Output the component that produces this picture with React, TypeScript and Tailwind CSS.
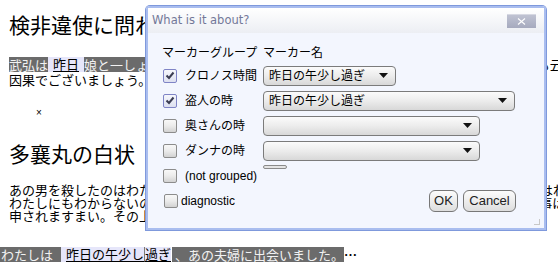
import React from "react";

function Cb({ checked }: { checked?: boolean }) {
  if (checked) {
    return (
      <span className="flex h-[14px] w-[14px] shrink-0 items-center justify-center rounded-[2px] border border-[#7f84c6] bg-linear-to-b from-[#f6f7fc] to-[#dde0f0]">
        <svg width="10" height="9" viewBox="0 0 10 9">
          <path d="M1.5 4.5 L4 7 L8.5 1.5" fill="none" stroke="#3b3d52" strokeWidth="2" />
        </svg>
      </span>
    );
  }
  return (
    <span className="block h-[14px] w-[14px] shrink-0 rounded-[2px] border border-[#8c8c8c] bg-linear-to-b from-[#f8f8f8] via-[#ebebeb] to-[#d2d2d2]" />
  );
}

function Sel({ w, text }: { w: string; text?: string }) {
  return (
    <div
      className={`flex h-[20px] items-center justify-between rounded-[4px] border border-[#7b7b7b] bg-linear-to-b from-[#fbfbfb] via-[#ececec] to-[#d8d8d8] pl-[5px] pr-[7px] ${w}`}
    >
      <span className="text-[12px] leading-[14px]">{text ?? ""}</span>
      <svg width="9" height="5" viewBox="0 0 9 5">
        <polygon points="0,0 9,0 4.5,5" fill="#111" />
      </svg>
    </div>
  );
}

export default function App() {
  return (
    <div className="relative h-[278px] w-[558px] overflow-hidden bg-white font-['Noto_Sans_CJK_JP',sans-serif] text-black">
      <div className="whitespace-nowrap pl-[9px]">
        <div className="pt-[12px] text-[21px] leading-[24px]">検非違使に問われたる木樵りの物語</div>

        <div className="mt-[21px] flex h-[15px] text-[13px] leading-[15px]">
          <span className="bg-[#6b6b6b] text-[#f2f2f2]">武弘は</span>
          <span className="flex bg-[#e6e6fa] px-[5px]">
            <span className="h-[15px] border-b border-black leading-[14px]">昨日</span>
          </span>
          <span className="bg-[#6b6b6b] text-[#f2f2f2]">娘と一しょに、若狭へ立ったのでございます。</span>
          <span>あの男がかようになりましたのも云わば</span>
        </div>
        <div className="text-[13px] leading-[15px]">因果でございましょう。</div>

        <div className="mt-[20px] pl-[27px] font-['Liberation_Sans',sans-serif] text-[10px] leading-[12px]">×</div>

        <div className="mt-[22px] text-[21px] leading-[24px]">多襄丸の白状</div>

        <div className="mt-[18px] text-[13px] leading-[13px]">
          <div>あの男を殺したのはわたしです。しかし女は殺しはしません。では何処へ行ったのか？それはわたしに</div>
          <div>わたしにもわからないのです。まあ、お待ちなさい。いくら拷問にかけられても、知らない事は申されません。</div>
          <div>申されますまい。その上わたしもこうなれば、卑怯な隠し立てはしないつもりです。</div>
        </div>

        <div className="-ml-[9px] mt-[25px] flex h-[15px] text-[13px] leading-[15px]">
          <span className="bg-[#6b6b6b] pl-[1px] pr-[8px] text-[#f2f2f2]">わたしは</span>
          <span className="flex bg-[#e6e6fa] pl-[5px]">
            <span className="h-[15px] border-b border-black leading-[14px]">昨日の午少し</span>
            <span className="h-[15px] border-b border-l border-b-black border-l-[#7a7a7a] leading-[14px]">過ぎ</span>
          </span>
          <span className="ml-[1px] bg-[#6b6b6b] pl-[3px] text-[#f2f2f2]">、あの夫婦に出会いました。</span>
          <span className="font-bold">…</span>
        </div>
      </div>

      {/* Dialog */}
      <div className="absolute left-[146px] top-[6px] flex h-[224px] w-[400px] flex-col rounded-t-[4px] border-2 border-[#a9bdef] font-['Liberation_Sans','Noto_Sans_CJK_JP',sans-serif] shadow-[0_0_0_1px_#7f99dc]">
        <div className="flex h-[25px] items-center justify-between bg-linear-to-b from-[#ffffff] to-[#eceef3] pl-[4px] pr-[8px]">
          <span className="font-['DejaVu_Sans',sans-serif] text-[11.5px] text-[#737898]">What is it about?</span>
          <div className="flex h-[14px] w-[29px] items-center justify-center border-t border-[#d6d8e2] bg-linear-to-b from-[#bfc2d2] to-[#a6aabe]">
            <svg width="9" height="7" viewBox="0 0 9 7">
              <path d="M1 0.5 L8 6.5 M8 0.5 L1 6.5" stroke="#fff" strokeWidth="1.1" />
            </svg>
          </div>
        </div>

        <div className="relative flex flex-1 flex-col bg-[#f3f6fe] pl-[15px] pr-[28px] pt-[13px] text-[12px]">
          <div className="mb-[3px] flex h-[14px] items-center leading-[14px]">
            <span className="-ml-[1px] w-[101px]">マーカーグループ</span>
            <span>マーカー名</span>
          </div>

          <div className="flex h-[25px] items-center">
            <div className="flex w-[100px] items-center">
              <Cb checked />
              <span className="ml-[8px]">クロノス時間</span>
            </div>
            <Sel w="w-[133px]" text="昨日の午少し過ぎ" />
          </div>
          <div className="flex h-[25px] items-center">
            <div className="flex w-[100px] items-center">
              <Cb checked />
              <span className="ml-[8px]">盗人の時</span>
            </div>
            <Sel w="w-[252px]" text="昨日の午少し過ぎ" />
          </div>
          <div className="flex h-[25px] items-center">
            <div className="flex w-[100px] items-center">
              <Cb />
              <span className="ml-[8px]">奥さんの時</span>
            </div>
            <Sel w="w-[217px]" />
          </div>
          <div className="flex h-[25px] items-center">
            <div className="flex w-[100px] items-center">
              <Cb />
              <span className="ml-[8px]">ダンナの時</span>
            </div>
            <Sel w="w-[217px]" />
          </div>
          <div className="flex h-[25px] items-start">
            <div className="flex h-[25px] w-[100px] items-center">
              <Cb />
              <span className="ml-[8px]">(not grouped)</span>
            </div>
            <div className="mt-[2px] h-[4px] w-[24px] rounded-full border border-[#8a8a8a] bg-[#e4e4e4]" />
          </div>

          <div className="mt-[2px] flex h-[22px] items-center justify-between">
            <div className="ml-[1px] flex items-center">
              <Cb />
              <span className="ml-[3px]">diagnostic</span>
            </div>
            <div className="flex gap-[5px] text-[13px]">
              <div className="flex h-[22px] w-[29px] items-center justify-center rounded-[6px] border border-[#777] bg-linear-to-b from-[#fcfcfc] to-[#dedede] text-[#222]">
                OK
              </div>
              <div className="flex h-[22px] w-[53px] items-center justify-center rounded-[6px] border border-[#777] bg-linear-to-b from-[#fcfcfc] to-[#dedede] text-[#222]">
                Cancel
              </div>
            </div>
          </div>

          <svg className="absolute bottom-[2px] right-[3px]" width="7" height="7" viewBox="0 0 7 7">
            <rect x="5" y="0" width="1" height="6" fill="#c8c8c8" />
            <rect x="0" y="5" width="6" height="1" fill="#c8c8c8" />
          </svg>
        </div>
      </div>
    </div>
  );
}
